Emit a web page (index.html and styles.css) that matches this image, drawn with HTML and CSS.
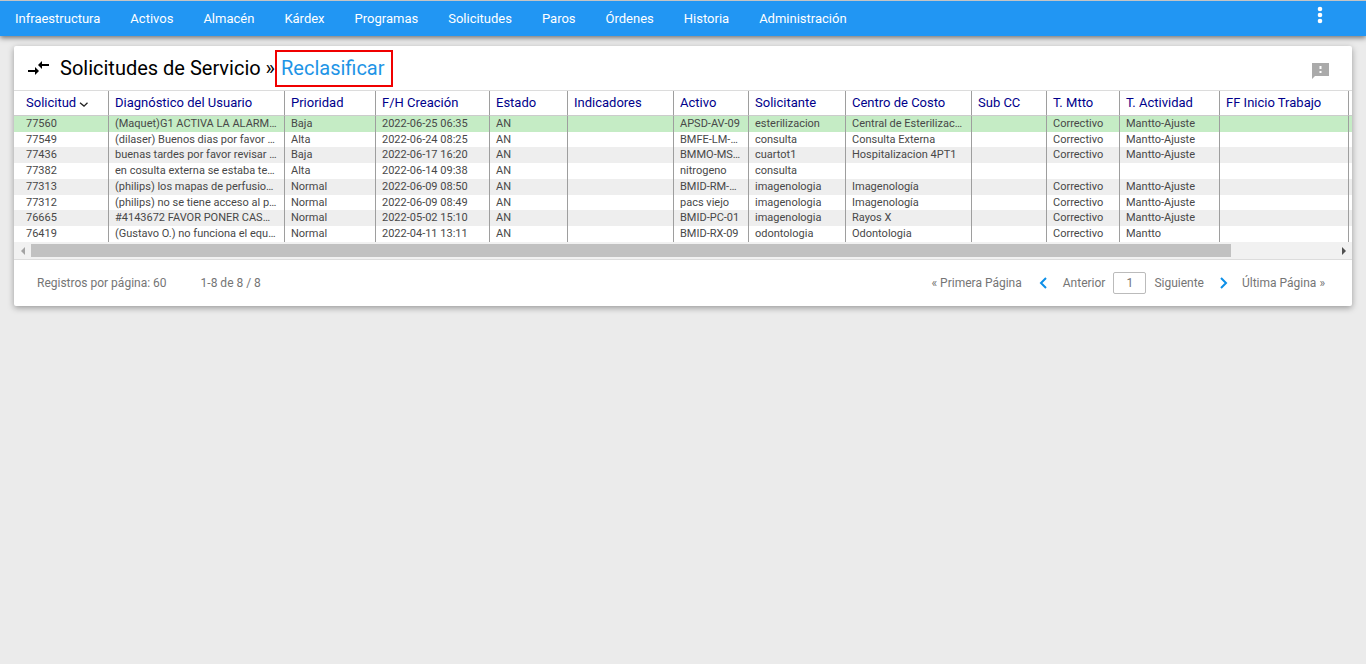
FILE: index.html
```
<!DOCTYPE html>
<html lang="es">
<head>
    <meta charset="utf-8">
    <meta name="viewport" content="width=device-width, initial-scale=1">

    <title>Solicitudes de Servicio</title>

    <link rel="stylesheet" href="styles.css">
</head>
<body>
    <header class="topbar">
        <nav class="menu">
            <a href="#">Infraestructura</a>
            <a href="#">Activos</a>
            <a href="#">Almacén</a>
            <a href="#">Kárdex</a>
            <a href="#">Programas</a>
            <a href="#">Solicitudes</a>
            <a href="#">Paros</a>
            <a href="#">Órdenes</a>
            <a href="#">Historia</a>
            <a href="#">Administración</a>
        </nav>
        <button type="button" class="more" aria-label="Más opciones">
            <svg width="6" height="18" viewBox="0 0 6 18" fill="#fff">
                <circle cx="3" cy="3" r="2.3"/>
                <circle cx="3" cy="9" r="2.3"/>
                <circle cx="3" cy="15" r="2.3"/>
            </svg>
        </button>
    </header>

    <main class="card">
        <div class="card-head">
            <svg class="icon-merge" width="22" height="16" viewBox="0 0 22 16">
                <path d="M0 10h7V7l4 4-4 4v-3H0zM21 4h-7V1l-4 4 4 4V6h7z" fill="#000"/>
            </svg>
            <h1 class="title">Solicitudes de Servicio »</h1>
            <a href="#" class="current">Reclasificar</a>
            <button type="button" class="feedback" aria-label="Comentarios">
                <svg width="17" height="16" viewBox="0 0 17 16">
                    <path d="M0 0h17v13H3l-3 3z" fill="#aaa"/>
                    <path d="M7.5 3h2v3h-2zM7.5 8h2v2h-2z" fill="#fff"/>
                </svg>
            </button>
        </div>

        <div class="grid">
            <table>
                <colgroup>
                    <col class="w-sol">
                    <col class="w-diag">
                    <col class="w-prio">
                    <col class="w-fecha">
                    <col class="w-estado">
                    <col class="w-ind">
                    <col class="w-activo">
                    <col class="w-solic">
                    <col class="w-centro">
                    <col class="w-sub">
                    <col class="w-mtto">
                    <col class="w-act">
                    <col class="w-inicio">
                    <col class="w-extra">
                </colgroup>
                <thead>
                    <tr>
                        <th>Solicitud
                            <svg width="9" height="5" viewBox="0 0 9 5"><path d="M1 0.7L5 4.1 8.5 0.7" fill="none" stroke="#222" stroke-width="1.3"/></svg>
                        </th>
                        <th>Diagnóstico del Usuario</th>
                        <th>Prioridad</th>
                        <th>F/H Creación</th>
                        <th>Estado</th>
                        <th>Indicadores</th>
                        <th>Activo</th>
                        <th>Solicitante</th>
                        <th>Centro de Costo</th>
                        <th>Sub CC</th>
                        <th>T. Mtto</th>
                        <th>T. Actividad</th>
                        <th>FF Inicio Trabajo</th>
                        <th></th>
                    </tr>
                </thead>
                <tbody>
                    <tr class="selected"><td>77560</td><td>(Maquet)G1 ACTIVA LA ALARM…</td><td>Baja</td><td>2022-06-25 06:35</td><td>AN</td><td></td><td>APSD-AV-09</td><td>esterilizacion</td><td>Central de Esterilizac…</td><td></td><td>Correctivo</td><td>Mantto-Ajuste</td><td></td><td></td></tr>
                    <tr><td>77549</td><td>(dilaser) Buenos dias por favor …</td><td>Alta</td><td>2022-06-24 08:25</td><td>AN</td><td></td><td>BMFE-LM-…</td><td>consulta</td><td>Consulta Externa</td><td></td><td>Correctivo</td><td>Mantto-Ajuste</td><td></td><td></td></tr>
                    <tr><td>77436</td><td>buenas tardes por favor revisar …</td><td>Baja</td><td>2022-06-17 16:20</td><td>AN</td><td></td><td>BMMO-MS…</td><td>cuartot1</td><td>Hospitalizacion 4PT1</td><td></td><td>Correctivo</td><td>Mantto-Ajuste</td><td></td><td></td></tr>
                    <tr><td>77382</td><td>en cosulta externa se estaba te…</td><td>Alta</td><td>2022-06-14 09:38</td><td>AN</td><td></td><td>nitrogeno</td><td>consulta</td><td></td><td></td><td></td><td></td><td></td><td></td></tr>
                    <tr><td>77313</td><td>(philips) los mapas de perfusio…</td><td>Normal</td><td>2022-06-09 08:50</td><td>AN</td><td></td><td>BMID-RM-…</td><td>imagenologia</td><td>Imagenología</td><td></td><td>Correctivo</td><td>Mantto-Ajuste</td><td></td><td></td></tr>
                    <tr><td>77312</td><td>(philips) no se tiene acceso al p…</td><td>Normal</td><td>2022-06-09 08:49</td><td>AN</td><td></td><td>pacs viejo</td><td>imagenologia</td><td>Imagenología</td><td></td><td>Correctivo</td><td>Mantto-Ajuste</td><td></td><td></td></tr>
                    <tr><td>76665</td><td>#4143672 FAVOR PONER CAS…</td><td>Normal</td><td>2022-05-02 15:10</td><td>AN</td><td></td><td>BMID-PC-01</td><td>imagenologia</td><td>Rayos X</td><td></td><td>Correctivo</td><td>Mantto-Ajuste</td><td></td><td></td></tr>
                    <tr><td>76419</td><td>(Gustavo O.) no funciona el equ…</td><td>Normal</td><td>2022-04-11 13:11</td><td>AN</td><td></td><td>BMID-RX-09</td><td>odontologia</td><td>Odontologia</td><td></td><td>Correctivo</td><td>Mantto</td><td></td><td></td></tr>
                </tbody>
            </table>
        </div>

        <div class="scrollbar">
            <button type="button" class="arrow" aria-label="Izquierda" disabled>
                <svg width="4" height="8" viewBox="0 0 4 8"><path d="M4 0v8L0 4z" fill="#a3a3a3"/></svg>
            </button>
            <div class="track"><div class="thumb"></div></div>
            <button type="button" class="arrow" aria-label="Derecha">
                <svg width="4" height="8" viewBox="0 0 4 8"><path d="M0 0v8l4-4z" fill="#505050"/></svg>
            </button>
        </div>

        <div class="card-foot">
            <span class="per-page">Registros por página: 60</span>
            <span>1-8 de 8 / 8</span>
            <nav class="pager">
                <a href="#" class="first">« Primera Página</a>
                <a href="#" class="prev">
                    <svg width="8" height="12" viewBox="0 0 8 12"><path d="M7 1L2 6l5 5" fill="none" stroke="#0c8fe8" stroke-width="2"/></svg>
                    Anterior
                </a>
                <input type="text" class="page" value="1" aria-label="Página">
                <a href="#" class="next">
                    Siguiente
                    <svg width="8" height="12" viewBox="0 0 8 12"><path d="M1 1l5 5-5 5" fill="none" stroke="#0c8fe8" stroke-width="2"/></svg>
                </a>
                <a href="#" class="last">Última Página »</a>
            </nav>
        </div>
    </main>
</body>
</html>
```
FILE: styles.css
```
* {
    box-sizing: border-box;
}
body {
    margin: 0;
    background: #ebebeb;
    font: 12px/16px Roboto, sans-serif;
    color: #484848;
}
a {
    color: inherit;
    text-decoration: none;
}
button {
    display: flex;
    align-items: center;
    justify-content: center;
    padding: 0;
    border: none;
    background: none;
    cursor: pointer;
}
svg {
    flex: none;
}

/* menu */
.topbar {
    display: flex;
    align-items: flex-start;
    justify-content: space-between;
    height: 36px;
    border-top: 1px solid #c4c4c4;
    background: #2196f3;
    box-shadow: 0 2px 5px rgba(0, 0, 0, 0.5);
}
.menu {
    display: flex;
    color: #fff;
    font-size: 13px;
    line-height: 35px;
}
.menu a {
    padding: 0 15px;
}
.more {
    width: 22px;
    height: 28px;
    margin-right: 35px;
}

/* card */
.card {
    margin: 10px 14px;
    background: #fff;
    border-radius: 2px;
    box-shadow: 0 2px 6px rgba(0, 0, 0, 0.35);
}
.card-head {
    display: flex;
    align-items: center;
    height: 45px;
    padding: 0 23px 0 14px;
    border-bottom: 1px solid #dcdcdc;
}
.icon-merge {
    margin-right: 10px;
}
.title {
    margin: 0;
    color: #000;
    font-size: 20px;
    font-weight: 400;
    line-height: 24px;
}
.current {
    padding: 0 6px 0 4px;
    border: 2px solid #f00000;
    color: #1e94e6;
    font-size: 20px;
    line-height: 33px;
}
.feedback {
    margin-left: auto;
}
.feedback svg {
    margin-top: 5px;
}

/* table */
.grid {
    overflow: hidden;
}
table {
    width: 1450px;
    table-layout: fixed;
    border-collapse: separate;
    border-spacing: 0;
}
.w-sol { width: 95px; }
.w-diag { width: 176px; }
.w-prio { width: 91px; }
.w-fecha { width: 114px; }
.w-estado { width: 78px; }
.w-ind { width: 106px; }
.w-activo { width: 75px; }
.w-solic { width: 97px; }
.w-centro { width: 126px; }
.w-sub { width: 75px; }
.w-mtto { width: 73px; }
.w-act { width: 100px; }
.w-inicio { width: 129px; }

th,
td {
    padding: 0 0 0 6px;
    border-right: 1px solid #9e9e9e;
    text-align: left;
    white-space: nowrap;
}
th:first-child,
td:first-child {
    padding-left: 12px;
}
th {
    height: 25px;
    border-bottom: 1px solid #ccc;
    color: #00008b;
    font-size: 13px;
    font-weight: 400;
    line-height: 24px;
}
th svg {
    vertical-align: 0;
}
td {
    height: 16px;
    font-size: 11px;
    line-height: 15px;
    vertical-align: top;
}
tr:nth-child(4n+2) td {
    height: 15px;
}
tbody tr:nth-child(odd) {
    background: #eee;
}
tbody .selected:nth-child(odd) {
    background: #c5ecc5;
}

.scrollbar {
    display: flex;
    height: 18px;
    background: #f1f1f1;
    border-bottom: 1px solid #dcdcdc;
}
.arrow {
    width: 17px;
}
.track {
    flex: 1;
    padding: 2px 0;
}
.thumb {
    width: 92%;
    height: 13px;
    background: #c1c1c1;
}

/* footer */
.card-foot {
    display: flex;
    align-items: center;
    height: 46px;
    padding: 0 27px 0 23px;
    color: #757575;
}
.per-page {
    margin-right: 34px;
}
.pager {
    display: flex;
    align-items: center;
    margin-left: auto;
}
.prev,
.next {
    display: flex;
    align-items: center;
    gap: 16px;
}
.first {
    margin-right: 17px;
}
.last {
    margin-left: 14px;
}
.page {
    width: 33px;
    height: 22px;
    margin: 0 8px;
    padding: 0;
    border: 1px solid #bbb;
    border-radius: 2px;
    color: #757575;
    font: 12px Roboto, sans-serif;
    text-align: center;
}
```
